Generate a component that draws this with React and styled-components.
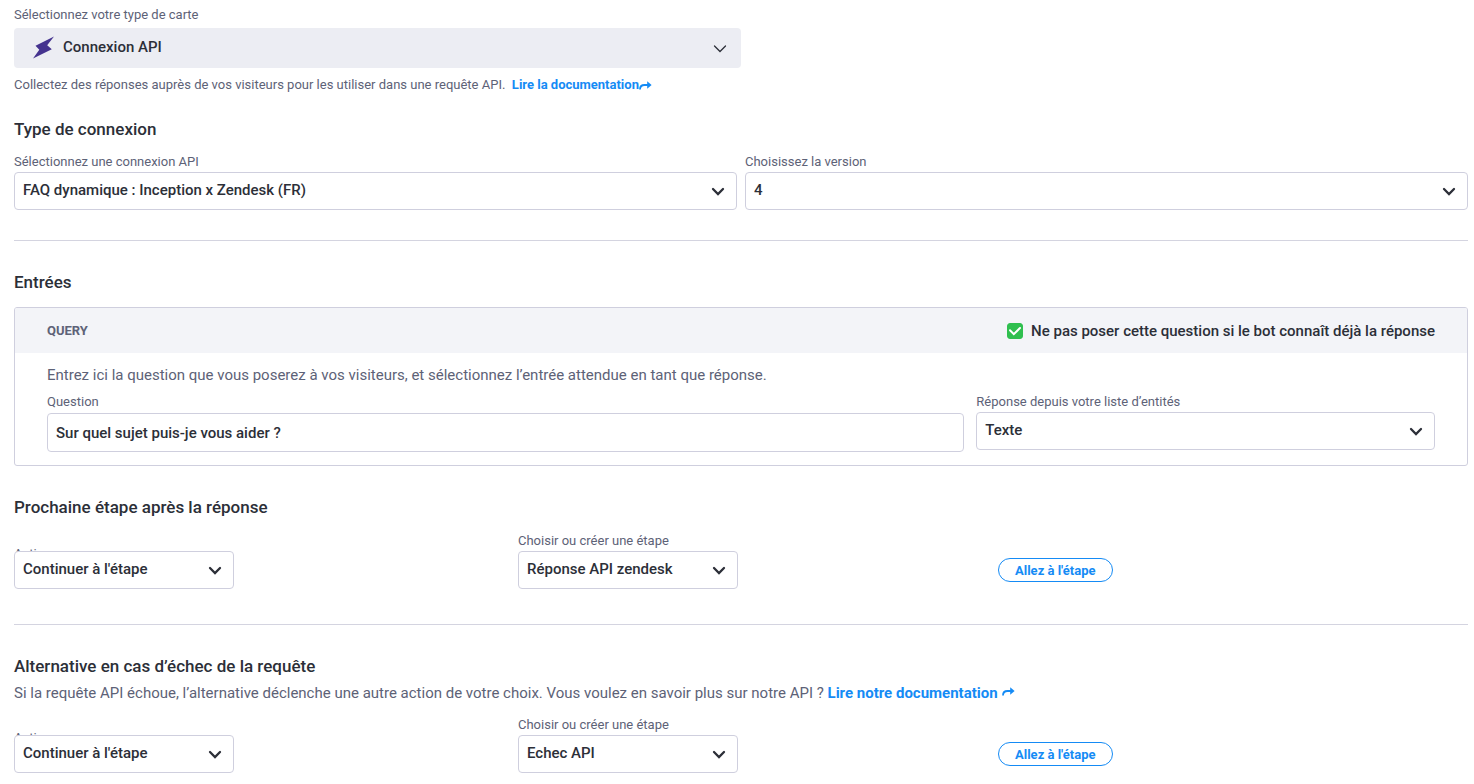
import React, { useId } from "react";
import styled, { createGlobalStyle } from "styled-components";

const GlobalStyle = createGlobalStyle`
  *, *::before, *::after { box-sizing: border-box; }
  body {
    margin: 0;
    background: #fff;
    color: #2c2f38;
    font-family: Roboto, "Liberation Sans", sans-serif;
    font-size: 15px;
    line-height: 20px;
  }
  h2, p { margin: 0; }
`;

const Page = styled.main`
  padding: 7px 6px 11px 14px;
`;

const Title = styled.h2`
  font-size: 17px;
  font-weight: 500;
  line-height: 20px;
  margin-bottom: ${(p) => p.$gap || "0"};
`;

const Label = styled.label`
  display: block;
  color: #5d6277;
  font-size: 13px;
  line-height: 16px;
  white-space: nowrap;
  margin-bottom: ${(p) => (p.$covered ? "-11px" : p.$gap || "2px")};
`;

const Text = styled.p`
  color: #5d6277;
  font-size: ${(p) => (p.$small ? "13px" : "15px")};
  line-height: ${(p) => (p.$small ? "16px" : "20px")};
`;

const DocLink = styled.a`
  color: #158bf5;
  font-weight: 700;
  text-decoration: none;
  svg {
    margin-left: ${(p) => (p.$raised ? "4px" : "0")};
    vertical-align: ${(p) => (p.$raised ? "2px" : "-1px")};
  }
`;

const Divider = styled.hr`
  border: 0;
  border-top: 1px solid #d4d4e0;
  margin: 0;
`;

const Section = styled.section`
  display: flow-root;
  padding: ${(p) => p.$pad};
`;

const Field = styled.div`
  flex: ${(p) => p.$grow || 1} 1 0;
  min-width: 0;
`;

const Row = styled.div`
  display: flex;
  gap: ${(p) => p.$gap};
`;

const SelectShell = styled.div`
  position: relative;
  display: grid;
  align-items: center;
  width: ${(p) => p.$width || "100%"};
  svg {
    grid-area: 1 / 1;
    justify-self: end;
    margin: 2px 12px 0 0;
    pointer-events: none;
  }
`;

const Select = styled.select`
  grid-area: 1 / 1;
  appearance: none;
  width: 100%;
  height: 38px;
  padding: 0 32px 2px 8px;
  border: 1px solid #cfcfde;
  border-radius: 4px;
  background: #fff;
  color: #2c2f38;
  font: 500 15px/20px Roboto, "Liberation Sans", sans-serif;
`;

const CardTypeShell = styled.div`
  display: grid;
  align-items: center;
  width: 50%;
  margin-bottom: 9px;
  svg { grid-area: 1 / 1; pointer-events: none; }
  svg:first-of-type { margin-left: 18px; z-index: 1; }
  svg:last-of-type { justify-self: end; margin: 2px 14px 0 0; }
`;

const CardTypeSelect = styled(Select)`
  height: 40px;
  padding-left: 49px;
  border: 0;
  background: #ecedf3;
`;

const TextInput = styled.input`
  display: block;
  width: 100%;
  height: 39px;
  padding: 0 8px;
  border: 1px solid #cfcfde;
  border-radius: 4px;
  color: #2c2f38;
  font: 500 15px/20px Roboto, "Liberation Sans", sans-serif;
`;

const Card = styled.div`
  border: 1px solid #cfcfde;
  border-radius: 3px;
  overflow: hidden;
`;

const CardHeader = styled.div`
  display: flex;
  align-items: center;
  justify-content: space-between;
  height: 45px;
  padding: 0 32px;
  background: #f3f4f8;
`;

const CardName = styled.span`
  color: #5d6277;
  font-size: 13px;
  font-weight: 700;
`;

const CheckLabel = styled.label`
  display: flex;
  align-items: center;
  gap: 8px;
  font-weight: 500;
`;

const CheckShell = styled.span`
  display: grid;
  svg { grid-area: 1 / 1; pointer-events: none; z-index: 1; }
`;

const Checkbox = styled.input`
  grid-area: 1 / 1;
  appearance: none;
  width: 16px;
  height: 16px;
  margin: 0;
  border: 1px solid #2fbf4f;
  border-radius: 3px;
  background: #fff;
  &:checked { background: #2fbf4f; }
  &:not(:checked) + svg { display: none; }
`;

const CardBody = styled.div`
  padding: 12px 32px 13px;
  display: grid;
  gap: 9px;
`;

const StepRow = styled.div`
  display: grid;
  grid-template-columns: 504fr 480fr 470fr;
  align-items: end;
  margin-top: ${(p) => p.$top};
`;

const StepButton = styled.button`
  justify-self: start;
  height: 24px;
  margin-bottom: 7px;
  padding: 2px 16px 0;
  border: 1px solid #158bf5;
  border-radius: 12px;
  background: #fff;
  color: #158bf5;
  font: 700 13px/20px Roboto, "Liberation Sans", sans-serif;
`;

const Bolt = () => (
  <svg width="23" height="24" viewBox="0 0 23 24" aria-hidden="true">
    <path d="M22 0.500 3.500 9.800l3.800 4L1 22.600 19.800 13.200l-4.600-3.900z" fill="#45338f" />
  </svg>
);

const Chevron = ({ thin }) => (
  <svg width="14" height="10" viewBox="0 0 14 10" fill="none" aria-hidden="true">
    <path
      d={thin ? "M1.500 2l5.500 5.500 5.500-5.500" : "M2 2l5 5 5-5"}
      stroke="#2c2f38"
      strokeWidth={thin ? 1.3 : 2.3}
      strokeLinecap="round"
    />
  </svg>
);

const Check = () => (
  <svg width="16" height="16" viewBox="0 0 16 16" fill="none" aria-hidden="true">
    <path d="M3 7.300l3.800 3.900L13 5" stroke="#fff" strokeWidth="2" strokeLinecap="round" />
  </svg>
);

const Arrow = () => (
  <svg width="13" height="9" viewBox="0 0 13 9" fill="none" aria-hidden="true">
    <path d="M1 8.500c0-3 1.500-4.500 4.500-4.500H10" stroke="#158bf5" strokeWidth="1.800" />
    <path d="M8.200 0.300 12.600 4 8.200 7.700z" fill="#158bf5" />
  </svg>
);

function SelectField({ label, value, width, covered, grow }) {
  const id = useId();
  return (
    <Field $grow={grow}>
      <Label htmlFor={id} $covered={covered}>{label}</Label>
      <SelectShell $width={width}>
        <Select id={id} defaultValue={value}>
          <option>{value}</option>
        </Select>
        <Chevron />
      </SelectShell>
    </Field>
  );
}

function NextStep({ step, top }) {
  return (
    <StepRow $top={top}>
      <SelectField label="Action" value="Continuer à l'étape" width="220px" covered />
      <SelectField label="Choisir ou créer une étape" value={step} width="220px" />
      <StepButton type="button">Allez à l'étape</StepButton>
    </StepRow>
  );
}

export default function App() {
  return (
    <>
      <GlobalStyle />
      <Page>
        <Label htmlFor="card-type" $gap="5px">Sélectionnez votre type de carte</Label>
        <CardTypeShell>
          <Bolt />
          <CardTypeSelect id="card-type" defaultValue="Connexion API">
            <option>Connexion API</option>
          </CardTypeSelect>
          <Chevron thin />
        </CardTypeShell>
        <Text $small>
          Collectez des réponses auprès de vos visiteurs pour les utiliser dans une requête API.{" "}
          &nbsp;<DocLink href="#documentation">Lire la documentation<Arrow /></DocLink>
        </Text>

        <Section $pad="26px 0 30px">
          <Title $gap="15px">Type de connexion</Title>
          <Row $gap="8px">
            <SelectField label="Sélectionnez une connexion API" value="FAQ dynamique : Inception x Zendesk (FR)" />
            <SelectField label="Choisissez la version" value="4" />
          </Row>
        </Section>
        <Divider />

        <Section $pad="31px 0 0">
          <Title $gap="15px">Entrées</Title>
          <Card>
            <CardHeader>
              <CardName>QUERY</CardName>
              <CheckLabel>
                <CheckShell>
                  <Checkbox type="checkbox" defaultChecked />
                  <Check />
                </CheckShell>
                Ne pas poser cette question si le bot connaît déjà la réponse
              </CheckLabel>
            </CardHeader>
            <CardBody>
              <Text>Entrez ici la question que vous poserez à vos visiteurs, et sélectionnez l’entrée attendue en tant que réponse.</Text>
              <Row $gap="12px">
                <Field $grow={2}>
                  <Label htmlFor="question" $gap="3px">Question</Label>
                  <TextInput id="question" defaultValue="Sur quel sujet puis-je vous aider ?" />
                </Field>
                <SelectField label="Réponse depuis votre liste d’entités" value="Texte" />
              </Row>
            </CardBody>
          </Card>
        </Section>

        <Section $pad="31px 0 35px">
          <Title>Prochaine étape après la réponse</Title>
          <NextStep step="Réponse API zendesk" top="16px" />
        </Section>
        <Divider />

        <Section $pad="31px 0 0">
          <Title $gap="7px">Alternative en cas d’échec de la requête</Title>
          <Text>
            Si la requête API échoue, l’alternative déclenche une autre action de votre choix. Vous voulez en savoir plus sur notre API ?{" "}
            <DocLink href="#api" $raised>Lire notre documentation<Arrow /></DocLink>
          </Text>
          <NextStep step="Echec API" top="14px" />
        </Section>
      </Page>
    </>
  );
}
